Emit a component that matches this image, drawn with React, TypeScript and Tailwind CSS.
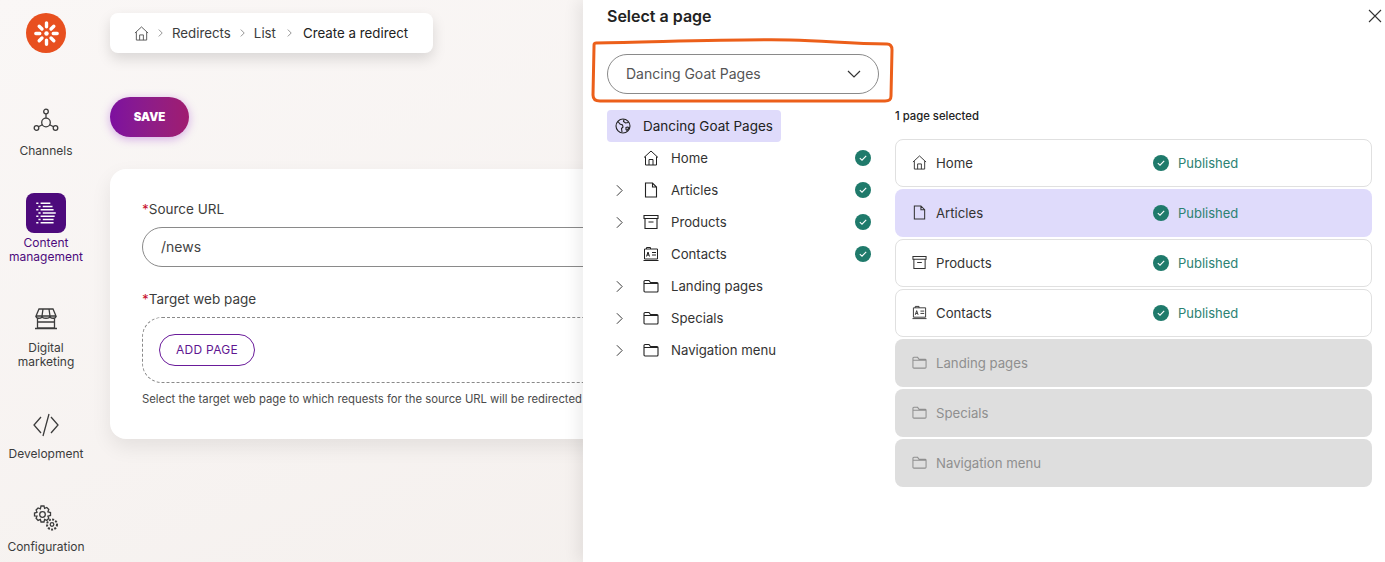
import type { ReactNode } from "react";

type IconProps = { className?: string };

const HomeIcon = ({ className = "" }: IconProps) => (
  <svg viewBox="0 0 16 16" fill="none" stroke="currentColor" strokeWidth="1" className={className}>
    <path d="M1 7.500 8 1l7 6.500M2.500 6.500v8.500h11V6.500M6 15V9.500h4V15" />
  </svg>
);
const FileIcon = ({ className = "" }: IconProps) => (
  <svg viewBox="0 0 16 16" fill="none" stroke="currentColor" strokeWidth="1.100" className={className}>
    <path d="M2.500 1h7l4 4v10h-11zM9.500 1v4h4" />
  </svg>
);
const ArchiveIcon = ({ className = "" }: IconProps) => (
  <svg viewBox="0 0 16 16" fill="none" stroke="currentColor" strokeWidth="1.100" className={className}>
    <path d="M1 1.500h14v3H1zM2 4.500v10h12v-10M5.500 8h5" />
  </svg>
);
const ContactIcon = ({ className = "" }: IconProps) => (
  <svg viewBox="0 0 16 16" fill="none" stroke="currentColor" strokeWidth="1" className={className}>
    <path d="M1.500 3h13v10h-13zM0.500 14.500h15M3.500 3V1.500h4V3M3.500 10.500l1.500-4.500 1.500 4.500M4 9h2M9 6.500h4M9 9h4" />
  </svg>
);
const FolderIcon = ({ className = "" }: IconProps) => (
  <svg viewBox="0 0 16 16" fill="none" stroke="currentColor" strokeWidth="1.100" className={className}>
    <path d="M1 3.500a1 1 0 0 1 1-1h4l1.500 2H14a1 1 0 0 1 1 1v7.500a1 1 0 0 1-1 1H2a1 1 0 0 1-1-1zM1 5.500h14" />
  </svg>
);
const GlobeIcon = ({ className = "" }: IconProps) => (
  <svg viewBox="0 0 16 16" fill="none" stroke="currentColor" strokeWidth="1.100" className={className}>
    <circle cx="8" cy="8" r="7" />
    <path d="M3 3.500 5 6l2.500 1 .5 2-1.500 1.500L7 14M9 1.500 8.500 3.500l2 1.500 3-.5M11 9.500l1.500-.5 1.500.5-2 3-1-1z" />
  </svg>
);
const Chevron = ({ className = "" }: IconProps) => (
  <svg viewBox="0 0 8 14" fill="none" stroke="currentColor" strokeWidth="1.100" className={className}>
    <path d="M1 1l6 6-6 6" />
  </svg>
);
const Check = () => (
  <span className="flex h-4 w-4 shrink-0 items-center justify-center rounded-full bg-[#1f7a6b]">
    <svg viewBox="0 0 10 10" fill="none" stroke="white" strokeWidth="1.100" className="h-2.5 w-2.5">
      <path d="M1.800 5.200 4 7.200l4.200-4.400" />
    </svg>
  </span>
);

const Logo = () => (
  <span className="flex h-10 w-10 items-center justify-center rounded-full bg-[#e8501f]">
    <svg viewBox="0 0 24 24" stroke="white" strokeWidth="3" strokeLinecap="round" className="h-[27px] w-[27px]">
      <path d="M12 2.500v3.500M12 18v3.500M2.500 12H6M18 12h3.500M5.500 5.500l2.500 2.500M16 16l2.500 2.500M18.500 5.500 16 8M8 16l-2.500 2.500" />
      <circle cx="12" cy="12" r="2" fill="white" stroke="none" />
    </svg>
  </span>
);

function NavItem({ icon, label, active = false, className = "" }: { icon: ReactNode; label: ReactNode; active?: boolean; className?: string }) {
  return (
    <div className={`flex w-[92px] flex-col items-center text-center text-[12px] leading-[14px] ${active ? "text-[#4d0a7c]" : "text-[#3c3c3c]"} ${className}`}>
      {icon}
      {label}
    </div>
  );
}

const treeRows = [
  { name: "Home", icon: HomeIcon, expand: false, ok: true },
  { name: "Articles", icon: FileIcon, expand: true, ok: true },
  { name: "Products", icon: ArchiveIcon, expand: true, ok: true },
  { name: "Contacts", icon: ContactIcon, expand: false, ok: true },
  { name: "Landing pages", icon: FolderIcon, expand: true, ok: false },
  { name: "Specials", icon: FolderIcon, expand: true, ok: false },
  { name: "Navigation menu", icon: FolderIcon, expand: true, ok: false },
];

export default function App() {
  return (
    <div className="relative flex h-[562px] w-[1385px] overflow-hidden bg-gradient-to-br from-[#faf7f6] to-[#f3eeeb] font-['Inter',sans-serif] text-[#3c3c3c]">
      {/* left nav */}
      <aside className="flex w-[92px] shrink-0 flex-col pt-[13px]">
        <div className="flex justify-center">
          <Logo />
        </div>
        <NavItem
          className="mt-[55px]"
          label={<span className="mt-[10px]">Channels</span>}
          icon={
            <svg viewBox="0 0 26 26" fill="none" stroke="#3c3c3c" strokeWidth="1.300" className="h-[26px] w-[26px]">
              <circle cx="13" cy="3.500" r="2.300" />
              <circle cx="13" cy="14.500" r="4.300" />
              <circle cx="3.500" cy="20" r="2.300" />
              <circle cx="22.500" cy="20" r="2.300" />
              <path d="M13 6v4M9.300 16.700l-3.800 2.100M16.700 16.700l3.800 2.100" />
            </svg>
          }
        />
        <NavItem
          active
          className="mt-[35px]"
          label={<span className="mt-[3px]">Content<br />management</span>}
          icon={
            <span className="flex h-10 w-10 items-center justify-center rounded-lg bg-[#4d0a7c]">
              <svg viewBox="0 0 24 24" stroke="white" strokeWidth="1.300" className="h-[26px] w-[26px]">
                <path d="M3 3h2M7 3h9M5 6h2M9 6h9M3 9h2M7 9h12M5 12h2M9 12h12M3 15h2M7 15h13M5 18h2M9 18h10M3 21h2M7 21h12" />
              </svg>
            </span>
          }
        />
        <NavItem
          className="mt-[43px]"
          label={<span className="mt-[10px]">Digital<br />marketing</span>}
          icon={
            <svg viewBox="0 0 24 24" fill="none" stroke="#3c3c3c" strokeWidth="1.300" className="h-6 w-6">
              <path d="M5 2h14l3 7H2zM2 9c0 3 6 3 6 0 0 3 8 3 8 0 0 3 6 3 6 0M9 2 8 9M15 2l1 7M3.500 11.500V21h17v-9.500M4 15h16M1 21.500h22" />
            </svg>
          }
        />
        <NavItem
          className="mt-[44px]"
          label={<span className="mt-[10px]">Development</span>}
          icon={
            <svg viewBox="0 0 26 24" fill="none" stroke="#3c3c3c" strokeWidth="1.300" className="h-6 w-[26px]">
              <path d="M8 4 1 12l7 8M18 4l7 8-7 8M16 1 10 23" />
            </svg>
          }
        />
        <NavItem
          className="mt-[44px]"
          label={<span className="mt-[9px]">Configuration</span>}
          icon={
            <svg viewBox="0 0 26 26" fill="none" stroke="#3c3c3c" strokeWidth="1.300" className="h-[26px] w-[26px]">
              <circle cx="9.500" cy="9.500" r="2.800" />
              <path d="M8 1h3l.6 2.400 2.200-.9 2 2-.9 2.300 2.600.7v3l-2.600.6.900 2.200-2 2.100-2.200-1-.6 2.600H8l-.6-2.600-2.300 1-2-2.100.9-2.200L1.500 11V8l2.500-.7-.9-2.300 2-2 2.300.9z" />
              <circle cx="19" cy="19.500" r="1.800" />
              <circle cx="19" cy="19.500" r="5" strokeWidth="2" strokeDasharray="2 1.300" />
            </svg>
          }
        />
      </aside>

      {/* page behind the panel */}
      <main className="min-w-0 flex-1 pl-[18px] pt-[13px]">
        <nav className="flex h-10 w-[323px] items-center rounded-lg bg-white pl-6 text-[13.300px] shadow-[0_6px_14px_rgba(0,0,0,0.13)]">
          <HomeIcon className="h-[15px] w-[15px] text-[#555]" />
          <Chevron className="ml-[9px] mr-[9px] h-[8px] w-[5px] text-[#555]" />
          <span className="pt-px">Redirects</span>
          <Chevron className="mx-[9px] h-[8px] w-[5px] text-[#555]" />
          <span className="pt-px">List</span>
          <Chevron className="mx-[11px] h-[8px] w-[5px] text-[#555]" />
          <span className="pt-px text-[#222]">Create a redirect</span>
        </nav>

        <button className="mt-[44px] block h-10 w-[79px] rounded-full bg-gradient-to-r from-[#7d0f9f] to-[#a01c70] pt-px text-[11.500px] font-black text-white shadow-[0_2px_10px_rgba(140,30,200,0.35)]">
          SAVE
        </button>

        <section className="mt-8 h-[270px] w-[900px] rounded-2xl bg-white pl-8 pt-[32px] shadow-[0_8px_20px_rgba(0,0,0,0.08)]">
          <label className="block text-[13.500px] leading-4">
            <span className="text-[#c8102e]">*</span>Source URL
          </label>
          <div className="mt-[10px] flex h-10 w-[800px] items-center rounded-full border border-[#8a8a8a] pb-px pl-[18px] text-[14px] text-[#444]">
            /news
          </div>
          <label className="mt-[24px] block text-[13.500px] leading-4">
            <span className="text-[#c8102e]">*</span>Target web page
          </label>
          <div className="mt-[10px] flex h-[66px] w-[800px] items-center rounded-[20px] border border-dashed border-[#8a8a8a] pl-4">
            <button className="h-8 w-[96px] rounded-full border border-[#6a1b9a] text-[12px] font-normal tracking-[0.3px] text-[#5f1691]">
              ADD PAGE
            </button>
          </div>
          <p className="mt-2 whitespace-nowrap text-[11.300px] leading-4 text-[#4a4a4a]">
            Select the target web page to which requests for the source URL will be redirected to.
          </p>
        </section>
      </main>

      {/* slide-in panel */}
      <div className="absolute bottom-0 right-0 top-0 w-[802px] bg-white pl-6 pt-[6px] shadow-[-6px_0_14px_rgba(0,0,0,0.07)]">
        <h2 className="text-[16px] font-semibold leading-5 text-[#222]">Select a page</h2>
        <svg viewBox="0 0 14 14" fill="none" stroke="#333" strokeWidth="1.100" className="absolute right-[3px] top-[9px] h-[14px] w-[14px]">
          <path d="M1 1l12 12M13 1 1 13" />
        </svg>

        <div className="mt-[28px] flex gap-4">
          <div className="w-[272px]">
            <div className="flex h-10 items-center justify-between rounded-full border border-[#8a8a8a] pb-px pl-[18px] pr-[17px] text-[14px] text-[#555]">
              Dancing Goat Pages
              <svg viewBox="0 0 14 8" fill="none" stroke="#333" strokeWidth="1.200" className="h-2 w-[14px]">
                <path d="M1 1l6 6 6-6" />
              </svg>
            </div>

            <div className="mt-4 inline-flex h-8 items-center rounded bg-[#dfdbfb] pl-2 pr-2 text-[13.500px] text-[#222]">
              <GlobeIcon className="mr-[12px] h-4 w-4" />
              Dancing Goat Pages
            </div>
            {treeRows.map((row) => (
              <div key={row.name} className="flex h-8 items-center pr-2 text-[13.200px] text-[#333]">
                <span className="flex w-[24px] justify-center">
                  {row.expand && <Chevron className="h-[13px] w-[7px] text-[#333]" />}
                </span>
                <span className="flex w-[40px] justify-center">
                  <row.icon className="h-4 w-4 text-[#222]" />
                </span>
                <span className="flex-1 pt-px">{row.name}</span>
                {row.ok && <Check />}
              </div>
            ))}
          </div>

          <div className="w-[477px] pt-[54px]">
            <p className="text-[11.300px] font-medium leading-4 text-[#222]">1 page selected</p>
            <div className="mt-[15px] flex flex-col gap-[2px]">
              {treeRows.map((row) => {
                const tone = !row.ok
                  ? "border-transparent bg-[#dedede] text-[#8f8f8f]"
                  : row.name === "Articles"
                    ? "border-transparent bg-[#dfdbfb] text-[#333]"
                    : "border-[#e0e0e0] bg-white text-[#333]";
                return (
                  <div key={row.name} className={`flex h-[48px] items-center rounded-lg border pl-[16px] text-[13.200px] ${tone}`}>
                    <span className="flex w-[241px] items-center gap-[9px]">
                      <row.icon className="h-[15px] w-[15px]" />
                      <span className="pt-px">{row.name}</span>
                    </span>
                    {row.ok && (
                      <span className="flex items-center gap-[9px] text-[13px] text-[#2c8172]">
                        <Check />
                        <span className="pt-px">Published</span>
                      </span>
                    )}
                  </div>
                );
              })}
            </div>
          </div>
        </div>
      </div>

      {/* orange marker annotation */}
      <svg viewBox="0 0 310 70" fill="none" stroke="#ec5f1a" strokeWidth="3" className="absolute left-[590px] top-[38px] h-[70px] w-[310px]">
        <path d="M6 5C70 4 150 1 200 2c40 1 60 4 97 4 4 0 5 3 5 6l-1 46c0 4-2 5-6 5L10 63c-5 0-7-2-7-6L4 9c0-3 0-4 2-4z" />
      </svg>
    </div>
  );
}
